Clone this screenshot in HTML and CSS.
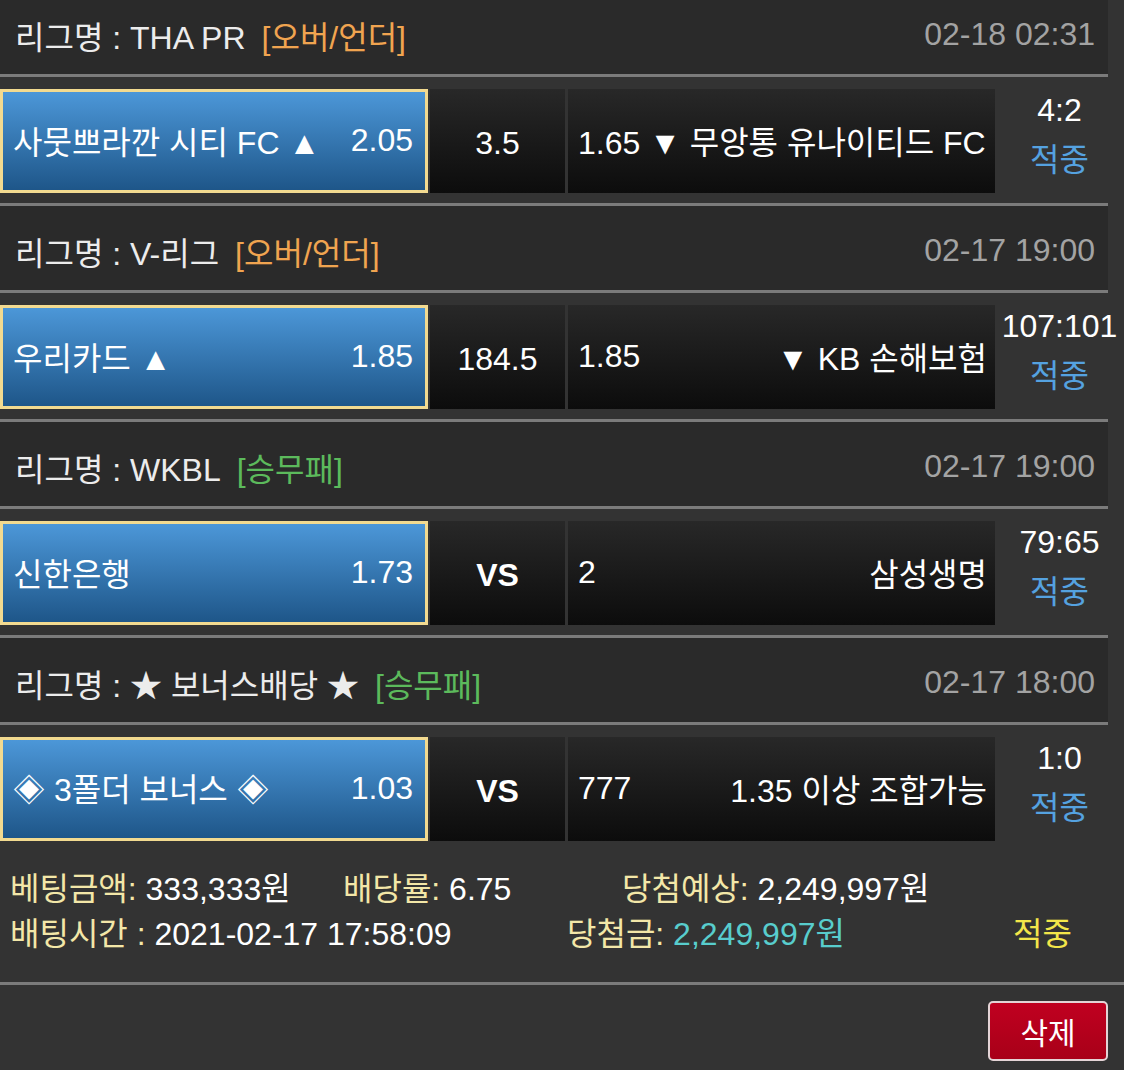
FILE: index.html
```html
<!DOCTYPE html>
<html lang="ko">
<head>
  <meta charset="UTF-8">
  <meta name="viewport" content="width=device-width, initial-scale=1.0">
  <title>배팅내역</title>
  <link rel="stylesheet" href="styles.css">
</head>
<body>
  <div class="slip">
    <div class="league">
      <span class="league-name">리그명 : THA PR<span class="type ou">[오버/언더]</span></span>
      <span class="time">02-18 02:31</span>
    </div>
    <div class="match">
      <div class="pick home"><span>사뭇쁘라깐 시티 FC ▲</span><span>2.05</span></div>
      <div class="mid">3.5</div>
      <div class="pick away"><span>1.65 ▼ 무앙통 유나이티드 FC</span></div>
      <div class="result"><span class="score">4:2</span><span class="hit">적중</span></div>
    </div>

    <div class="league">
      <span class="league-name">리그명 : V-리그<span class="type ou">[오버/언더]</span></span>
      <span class="time">02-17 19:00</span>
    </div>
    <div class="match">
      <div class="pick home"><span>우리카드 ▲</span><span>1.85</span></div>
      <div class="mid">184.5</div>
      <div class="pick away"><span>1.85</span><span>▼ KB 손해보험</span></div>
      <div class="result"><span class="score">107:101</span><span class="hit">적중</span></div>
    </div>

    <div class="league">
      <span class="league-name">리그명 : WKBL<span class="type wdl">[승무패]</span></span>
      <span class="time">02-17 19:00</span>
    </div>
    <div class="match">
      <div class="pick home"><span>신한은행</span><span>1.73</span></div>
      <div class="mid vs">VS</div>
      <div class="pick away"><span>2</span><span>삼성생명</span></div>
      <div class="result"><span class="score">79:65</span><span class="hit">적중</span></div>
    </div>

    <div class="league">
      <span class="league-name">리그명 : ★ 보너스배당 ★<span class="type wdl">[승무패]</span></span>
      <span class="time">02-17 18:00</span>
    </div>
    <div class="match">
      <div class="pick home"><span>◈ 3폴더 보너스 ◈</span><span>1.03</span></div>
      <div class="mid vs">VS</div>
      <div class="pick away"><span>777</span><span>1.35 이상 조합가능</span></div>
      <div class="result"><span class="score">1:0</span><span class="hit">적중</span></div>
    </div>

    <div class="summary">
      <div class="summary-line first">
        <span class="cell"><span class="label">베팅금액:</span> 333,333원</span>
        <span class="cell"><span class="label">배당률:</span> 6.75</span>
        <span class="cell"><span class="label">당첨예상:</span> 2,249,997원</span>
      </div>
      <div class="summary-line second">
        <span class="cell"><span class="label">배팅시간 :</span> 2021-02-17 17:58:09</span>
        <span class="cell"><span class="label">당첨금:</span> <span class="won">2,249,997원</span></span>
        <span class="cell status">적중</span>
      </div>
    </div>

    <div class="actions">
      <button class="delete-button">삭제</button>
    </div>
  </div>
</body>
</html>
```

FILE: styles.css
```css
body {
  margin: 0;
  padding: 0;
  background-color: #333333;
  font-family: "Liberation Sans", "Noto Sans CJK KR", sans-serif;
  color: #ffffff;
  font-size: 32px;
}

.slip {
  margin-top: -13px;
}

.league {
  display: flex;
  justify-content: space-between;
  align-items: center;
  height: 90px;
  margin-right: 16px;
  padding: 5px 13px 0 15px;
  box-sizing: border-box;
  background-color: #2a2a2a;
  border-top: 3px solid #7b7b7b;
  border-bottom: 3px solid #7b7b7b;
  color: #ececec;
}

.league .type {
  margin-left: 16px;
}

.type.ou {
  color: #f0a450;
}

.type.wdl {
  color: #5cba5c;
}

.league .time {
  color: #a3a3a3;
}

.match {
  display: grid;
  grid-template-columns: 428px 137px 3px 427px 129px;
  align-items: start;
  height: 126px;
  padding-top: 12px;
  box-sizing: border-box;
}

.match > div {
  height: 104px;
  box-sizing: border-box;
  white-space: nowrap;
}

.pick {
  display: flex;
  justify-content: space-between;
  align-items: center;
}

.pick.home {
  grid-column: 1;
  padding: 0 12px 2px 10px;
  background: linear-gradient(#4c97d8, #1e5689);
  border: 3px solid #f2da90;
}

.mid {
  grid-column: 2;
  margin-left: 2px;
  display: flex;
  justify-content: center;
  align-items: center;
  padding-top: 4px;
  background: linear-gradient(#282828, #0c0c0c);
}

.mid.vs {
  font-weight: bold;
}

.pick.away {
  grid-column: 4;
  padding: 0 8px 2px 10px;
  background: linear-gradient(#282828, #0c0c0c);
}

.result {
  grid-column: 5;
  display: flex;
  flex-direction: column;
  align-items: center;
  gap: 5px;
  padding-top: 3px;
}

.result .hit {
  color: #55a2e0;
}

.summary {
  padding: 12px 0 29px 10px;
  border-bottom: 3px solid #7b7b7b;
}

.summary-line {
  display: flex;
  height: 45px;
  align-items: center;
}

.summary .label {
  color: #f3e7a8;
}

.summary-line.first .cell:nth-child(1) {
  width: 333px;
}

.summary-line.first .cell:nth-child(2) {
  width: 279px;
}

.summary-line.second .cell:nth-child(1) {
  width: 557px;
}

.summary-line.second .cell:nth-child(2) {
  width: 446px;
}

.summary .won {
  color: #58cdcd;
}

.summary .status {
  color: #f3e64a;
}

.actions {
  display: flex;
  justify-content: flex-end;
  padding: 16px 16px 0 0;
}

.delete-button {
  width: 120px;
  height: 60px;
  background: linear-gradient(#c00020, #a80018);
  border: 2px solid #e4d4d6;
  border-radius: 5px;
  color: #ffffff;
  font-family: "Liberation Sans", "Noto Sans CJK KR", sans-serif;
  font-size: 30px;
  cursor: pointer;
}
```
